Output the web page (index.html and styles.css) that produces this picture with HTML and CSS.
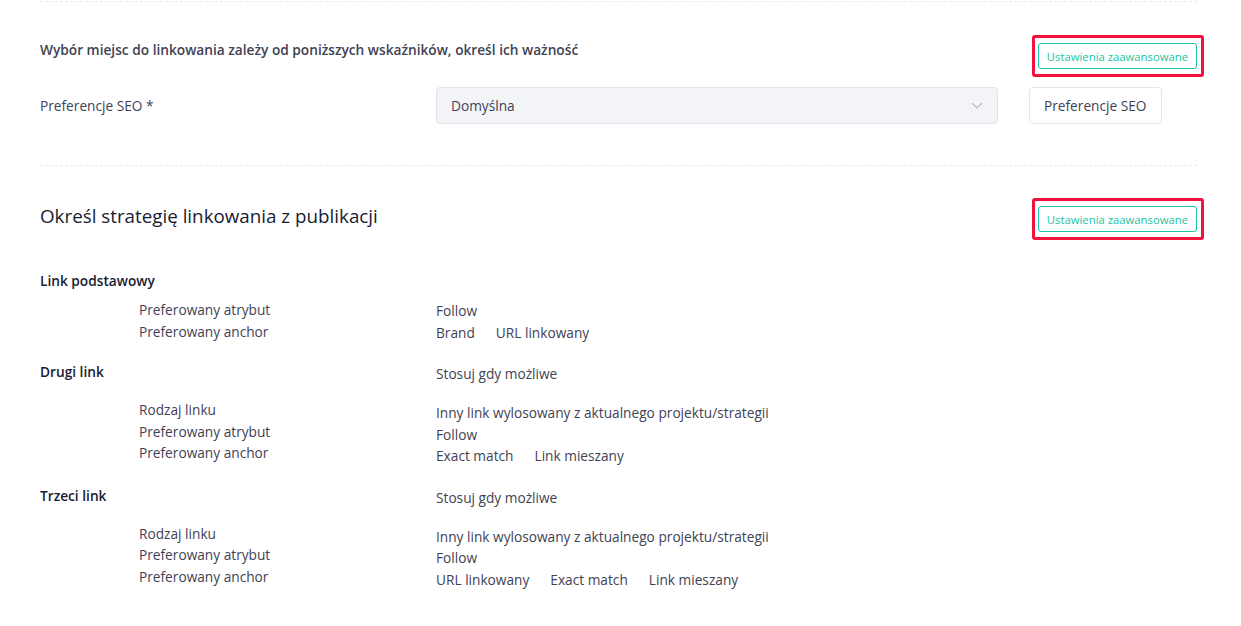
FILE: index.html
```html
<!DOCTYPE html>
<html lang="pl">
<head>
  <meta charset="UTF-8">
  <title>Strategia linkowania</title>
  <meta name="viewport" content="width=device-width, initial-scale=1.0">
  <link rel="stylesheet" href="styles.css">
</head>
<body>

<div class="page">
  <hr class="divider">

  <!-- Wskazniki -->
  <section class="section section-factors">
    <div class="section-head">
      <p class="section-intro">Wybór miejsc do linkowania zależy od poniższych wskaźników, określ ich ważność</p>
      <button class="btn-outline marked">Ustawienia zaawansowane</button>
    </div>

    <div class="form-row">
      <label class="form-label">Preferencje SEO *</label>
      <div class="select">
        <span>Domyślna</span>
        <svg width="12" height="7" viewBox="0 0 12 7"><polyline points="1,1 6,6 11,1" fill="none" stroke="#b5b7c4" stroke-width="1.1"/></svg>
      </div>
      <button class="btn-light">Preferencje SEO</button>
    </div>
  </section>

  <hr class="divider">

  <!-- Strategia -->
  <section class="section section-strategy">
    <div class="section-head">
      <h2 class="section-title">Określ strategię linkowania z publikacji</h2>
      <button class="btn-outline marked">Ustawienia zaawansowane</button>
    </div>

    <div class="group">
      <div class="group-head">
        <span class="group-name">Link podstawowy</span>
      </div>
      <div class="group-body">
        <ul class="labels">
          <li>Preferowany atrybut</li>
          <li>Preferowany anchor</li>
        </ul>
        <ul class="values">
          <li>Follow</li>
          <li class="tags"><span>Brand</span><span>URL linkowany</span></li>
        </ul>
      </div>
    </div>

    <div class="group">
      <div class="group-head with-value">
        <span class="group-name">Drugi link</span>
        <span class="group-value">Stosuj gdy możliwe</span>
      </div>
      <div class="group-body">
        <ul class="labels">
          <li>Rodzaj linku</li>
          <li>Preferowany atrybut</li>
          <li>Preferowany anchor</li>
        </ul>
        <ul class="values">
          <li>Inny link wylosowany z aktualnego projektu/strategii</li>
          <li>Follow</li>
          <li class="tags"><span>Exact match</span><span>Link mieszany</span></li>
        </ul>
      </div>
    </div>

    <div class="group">
      <div class="group-head with-value">
        <span class="group-name">Trzeci link</span>
        <span class="group-value">Stosuj gdy możliwe</span>
      </div>
      <div class="group-body">
        <ul class="labels">
          <li>Rodzaj linku</li>
          <li>Preferowany atrybut</li>
          <li>Preferowany anchor</li>
        </ul>
        <ul class="values">
          <li>Inny link wylosowany z aktualnego projektu/strategii</li>
          <li>Follow</li>
          <li class="tags"><span>URL linkowany</span><span>Exact match</span><span>Link mieszany</span></li>
        </ul>
      </div>
    </div>
  </section>
</div>

</body>
</html>
```

FILE: styles.css
```css
* { margin: 0; padding: 0; box-sizing: border-box; }
html, body {
  width: 100%;
  height: 100%;
  font-family: "Open Sans", Arial, sans-serif;
  font-size: 13.7px;
  color: #3f4254;
  background: #fff;
}
ul { list-style: none; }
.page {
  width: 1197px;
  padding: 1px 0 0 40px;
}
.divider {
  border: none;
  border-top: 1px dashed #e9eaef;
}
.section-head {
  display: flex;
  justify-content: space-between;
  align-items: flex-start;
}
.section-factors {
  padding: 41px 0 41px;
}
.section-intro {
  font-weight: 600;
  line-height: 20px;
  margin-top: -3px;
}
.section-strategy {
  padding-top: 40px;
}
.section-title {
  font-size: 18.8px;
  font-weight: 500;
  line-height: 25px;
  color: #181c32;
  margin-top: -2px;
}

/* buttons */
.btn-outline {
  height: 26px;
  padding: 0 8px;
  font-family: inherit;
  font-size: 11.3px;
  color: #1bc5a0;
  background: #fff;
  border: 1px solid #1bc5a0;
  border-radius: 3px;
  position: relative;
}
.marked::after {
  content: "";
  position: absolute;
  top: -9px; bottom: -9px;
  left: -7px; right: -8px;
  border: 3px solid #f3123f;
  border-radius: 3px;
}
.btn-light {
  height: 37px;
  padding: 0 14px;
  font-family: inherit;
  font-size: 13.7px;
  color: #3f4254;
  background: #fff;
  border: 1px solid #e4e6ef;
  border-radius: 4px;
}

/* form */
.form-row {
  display: grid;
  grid-template-columns: 396px 562px auto;
  align-items: center;
  justify-content: start;
  margin-top: 18px;
}
.form-label {
  line-height: 20px;
}
.select {
  height: 37px;
  display: flex;
  align-items: center;
  justify-content: space-between;
  padding: 0 14px 0 14px;
  background: #f3f4f7;
  border: 1px solid #e1e3ea;
  border-radius: 4px;
}
.form-row .btn-light {
  margin-left: 31px;
}

/* link groups */
.group {
  margin-top: 18px;
}
.section-head + .group {
  margin-top: 38px;
}
.group-head,
.group-body {
  display: grid;
  grid-template-columns: 396px 1fr;
}
.group-head {
  line-height: 21px;
  margin-bottom: 8px;
}
.group-head.with-value {
  margin-bottom: 15px;
}
.group-name {
  font-weight: 600;
  color: #181c32;
}
.group-value {
  padding-top: 2px;
}
.labels,
.values {
  line-height: 21.5px;
}
.labels {
  padding-left: 99px;
}
.values {
  padding-top: 1px;
}
.with-value + .group-body .values {
  padding-top: 3px;
}
.tags {
  display: flex;
  gap: 21px;
}
```
